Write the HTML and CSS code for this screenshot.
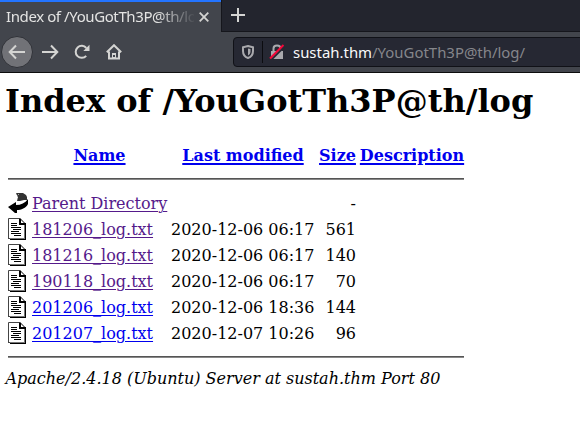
FILE: index.html
```html
<!DOCTYPE html>
<html lang="en">
<head>
<meta charset="utf-8">
<title>Index of /YouGotTh3P@th/log</title>
<link rel="stylesheet" href="styles.css">
</head>
<body>
<svg class="defs" width="0" height="0" aria-hidden="true">
  <symbol id="doc" viewBox="0 0 20 22">
    <path d="M.5 .5H12L17.5 6V20.5H.5z" fill="#fff"/>
    <path d="M.5 20.500V.5H12.5M0 20.500H3" fill="none" stroke="#444"/>
    <path d="M12 .5L17 5.500" fill="none" stroke="#000"/>
    <path d="M17.500 5V21M2 21.500H18" fill="none" stroke="#000"/>
    <path d="M2 20.500H17M16.500 7V21" stroke="#777"/>
    <path d="M11 1V7H17V5H13V1z" fill="#000"/>
    <path d="M3 5.500H9M3 7.500H9M3 9.500H13M5 11.500H13M3 13.500H11M3 15.500H13M6 17.500H13" stroke="#000"/>
  </symbol>
  <symbol id="back" viewBox="0 0 20 22">
    <path d="M8 1H15L18 3L19 5V8H16L12 9H9L10 5z" fill="#333"/>
    <path d="M8 2.500H12M9 4.500H11M9 6.500H11" stroke="#aaa" stroke-dasharray="1 1"/>
    <path d="M0 15L8 10V13C13 13 17 11 20 7V12C18 16 13 18 9 18V21H7z" fill="#000"/>
  </symbol>
</svg>
<header class="browser">
  <div class="tabs">
    <div class="tab">
      <span class="tab-title">Index of /YouGotTh3P@th/log</span>
      <svg class="close" width="10" height="10" viewBox="0 0 10 10"><path d="M.7 .7L9.300 9.300M9.300 .7L.7 9.300"/></svg>
    </div>
    <div class="tab-rest"><svg width="14" height="14" viewBox="0 0 14 14"><path d="M7 0V14M0 7H14"/></svg></div>
  </div>
  <div class="toolbar">
    <span class="back"><svg width="18" height="16" viewBox="0 0 18 16"><path d="M17 8H2M8 1.500L1.700 8L8 14.500"/></svg></span>
    <svg class="forward" width="18" height="16" viewBox="0 0 18 16"><path d="M1 8H16M10 1.500L16.300 8L10 14.500"/></svg>
    <svg class="reload" width="16" height="16" viewBox="0 0 16 16"><path d="M12.200 11.800A6 6 0 1 1 12.300 4"/><path class="solid" d="M15.500 .8V7H9.300z"/></svg>
    <svg class="home" width="16" height="16" viewBox="0 0 16 16"><path d="M.8 8.200L8 1.200L15.200 8.200M3 7.500V14.500H13V7.500"/><path class="solid" d="M6 9H10V15H6z"/><path class="hole" d="M8 11V13"/></svg>
    <div class="url">
      <svg class="shield" width="12" height="14" viewBox="0 0 12 14"><path d="M6 1L11 2.200V6C11 9.500 9 12 6 13C3 12 1 9.500 1 6V2.200z"/><path class="solid" d="M6 3.500L8.500 4V6.500C8.500 8.500 7.500 9.800 6 10.500z"/></svg>
      <span class="divider"></span>
      <svg class="lock" width="16" height="16" viewBox="0 0 16 16"><path class="shackle" d="M4.500 8V4.500C4.500 .5 11.500 .5 11.500 4.500V8"/><path class="body" d="M2 7H14V15H2z"/><path class="gap" d="M2 16L16 2"/><path class="slash" d="M1 14.500L14.500 1"/></svg>
      <span class="address"><b>sustah.thm</b>/YouGotTh3P@th/log/</span>
    </div>
  </div>
</header>
<main>
  <h1>Index of /YouGotTh3P@th/log</h1>
  <div class="listing">
    <div class="row head"><span></span><a href="#">Name</a><a href="#">Last modified</a><a href="#">Size</a><a href="#">Description</a></div>
    <hr>
    <div class="row"><svg class="icon"><use href="#back"/></svg><a class="seen" href="#">Parent Directory</a><span></span><span class="size">-</span></div>
    <div class="row"><svg class="icon"><use href="#doc"/></svg><a class="seen" href="#">181206_log.txt</a><span>2020-12-06 06:17</span><span class="size">561</span></div>
    <div class="row"><svg class="icon"><use href="#doc"/></svg><a class="seen" href="#">181216_log.txt</a><span>2020-12-06 06:17</span><span class="size">140</span></div>
    <div class="row"><svg class="icon"><use href="#doc"/></svg><a class="seen" href="#">190118_log.txt</a><span>2020-12-06 06:17</span><span class="size">70</span></div>
    <div class="row"><svg class="icon"><use href="#doc"/></svg><a href="#">201206_log.txt</a><span>2020-12-06 18:36</span><span class="size">144</span></div>
    <div class="row"><svg class="icon"><use href="#doc"/></svg><a href="#">201207_log.txt</a><span>2020-12-07 10:26</span><span class="size">96</span></div>
    <hr class="last">
  </div>
  <address>Apache/2.4.18 (Ubuntu) Server at sustah.thm Port 80</address>
</main>
</body>
</html>
```
FILE: styles.css
```css
* { box-sizing: border-box; }
body { margin: 0; height: 433px; overflow: hidden; background: #fff; color: #000; font: 16px/19px "DejaVu Serif", serif; }
svg { display: block; flex: none; }
.defs { position: absolute; }
.browser { height: 73px; background: #42454c; border-bottom: 1px solid #0c0c0d; font-family: "Noto Sans", sans-serif; }
.browser path { fill: none; stroke: #d4d4d2; stroke-width: 2; }
.browser path.solid { fill: #d4d4d2; stroke: none; }
.browser path.hole { stroke: #42454c; }
.tabs { display: flex; height: 32px; }
.tab { width: 221px; padding: 0 12px 1px 6px; display: flex; align-items: center; justify-content: space-between; border-top: 2px solid #2374ff; }
.tab-title { width: 188px; overflow: hidden; white-space: nowrap; color: #e4e4e3; font-size: 15px; letter-spacing: -.4px; line-height: 21px; -webkit-mask-image: linear-gradient(to right, #000 150px, transparent 190px); mask-image: linear-gradient(to right, #000 150px, transparent 190px); }
.tab .close path { stroke-width: 1.8; }
.tab-rest { flex: 1; padding: 8px 9px; background: #23252e; border-left: 1px solid #15161c; border-bottom: 1px solid #15161c; }
.toolbar { display: flex; align-items: center; height: 40px; padding-left: 1px; }
.back { display: flex; align-items: center; justify-content: center; width: 32px; height: 32px; border: 1px solid #303238; border-radius: 50%; background: #717277; }
.forward { margin-left: 8px; }
.reload { margin-left: 15px; }
.home { margin-left: 16px; }
.url { display: flex; align-items: center; align-self: flex-start; flex: 0 0 352px; height: 30px; margin: 5px -5px 0 auto; padding-left: 8px; background: #262833; border: 1px solid #101117; border-radius: 4px; }
.url .shield path { stroke: #a9a9ad; }
.url .shield path.solid { fill: #a9a9ad; stroke: none; }
.divider { width: 1px; height: 22px; margin: 0 6px 0 8px; background: #0c0c10; }
.url .lock .shackle { stroke: #a9a9ad; }
.url .lock .body { fill: #a9a9ad; stroke: none; }
.url .lock .gap { stroke: #262833; }
.url .lock .slash { stroke: #f50739; }
.address { margin-left: 8px; color: #85868b; font-size: 14.93px; line-height: 22px; white-space: nowrap; }
.address b { font-weight: 400; color: #f9f9fa; }
main { padding: 9px 5px 0; }
h1 { margin: 0; font-size: 32px; line-height: 38px; white-space: nowrap; }
.listing { width: 456px; margin: 26px 0 0 3px; }
.row { display: grid; grid-template-columns: 20px 135px 144px 37px 104px; column-gap: 4px; height: 26px; align-items: center; white-space: nowrap; }
.row.head { height: 19px; font-weight: 700; justify-items: center; }
.icon { width: 20px; height: 22px; }
.size { text-align: right; }
hr { height: 2px; margin: 13px 0 10px; border: 0; border-top: 1px solid #555; background: #888; }
hr.last { margin: 10px 0 0; }
a { color: #0000ee; text-decoration: underline; text-decoration-thickness: 1px; text-underline-offset: 2px; }
.head a { text-decoration-thickness: 2px; }
a.seen { color: #551a8b; }
address { margin: 11px 0 0 .5px; }
```
